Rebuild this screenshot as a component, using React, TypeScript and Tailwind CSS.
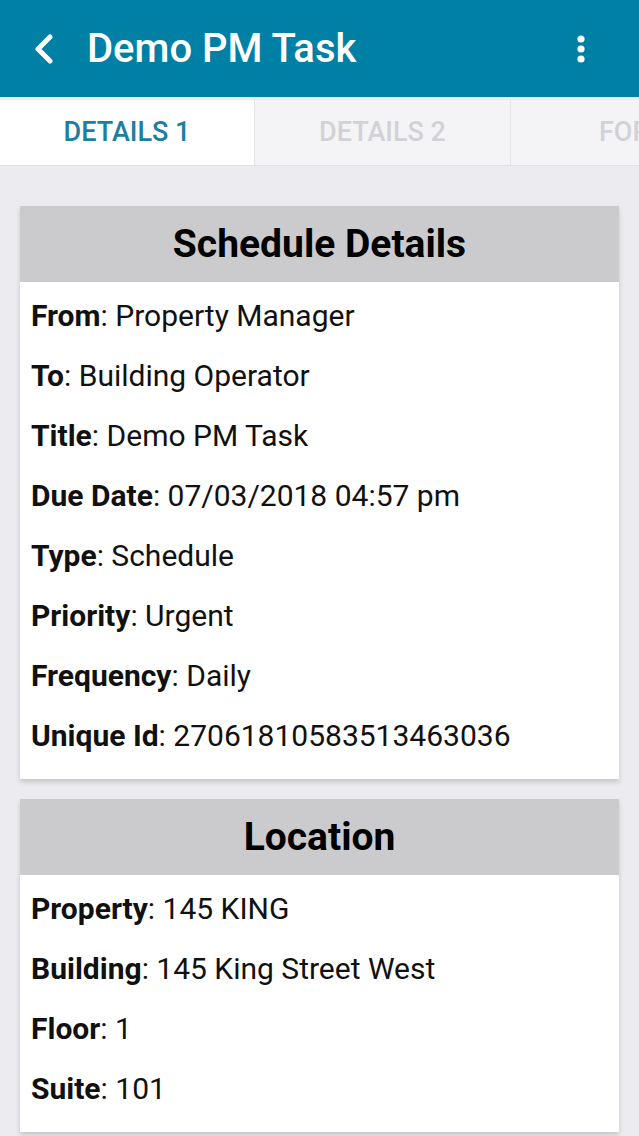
import React from "react";

interface Field {
  label: string;
  value: string;
}

const schedule: Field[] = [
  { label: "From", value: "Property Manager" },
  { label: "To", value: "Building Operator" },
  { label: "Title", value: "Demo PM Task" },
  { label: "Due Date", value: "07/03/2018 04:57 pm" },
  { label: "Type", value: "Schedule" },
  { label: "Priority", value: "Urgent" },
  { label: "Frequency", value: "Daily" },
  { label: "Unique Id", value: "27061810583513463036" },
];

const location: Field[] = [
  { label: "Property", value: "145 KING" },
  { label: "Building", value: "145 King Street West" },
  { label: "Floor", value: "1" },
  { label: "Suite", value: "101" },
];

const Card: React.FC<{ title: string; fields: Field[] }> = ({ title, fields }) => (
  <div className="bg-white shadow-[0_3px_5px_rgba(0,0,0,0.16)]">
    <div className="h-[76px] bg-[#cbcacc] flex items-center justify-center">
      <h2 className="text-[39px] font-bold text-black leading-none">{title}</h2>
    </div>
    <div className="pt-[3px] pb-[14px]">
      {fields.map((f) => (
        <div key={f.label} className="h-[60px] flex items-center px-[11px] text-[30px] text-[#111] whitespace-nowrap">
          <span className="font-bold">{f.label}</span>
          <span>: {f.value}</span>
        </div>
      ))}
    </div>
  </div>
);

const App: React.FC = () => {
  return (
    <div className="w-[639px] h-[1136px] overflow-hidden bg-[#ebebf0] font-['Roboto',sans-serif]">
      {/* App bar */}
      <div className="h-[97px] bg-[#0080a5] flex items-center px-[33px] text-white">
        <svg width="22" height="30" viewBox="0 0 22 30" className="mr-[32px]">
          <path d="M17 3 L5 15 L17 27" fill="none" stroke="white" strokeWidth="5" strokeLinecap="round" strokeLinejoin="round" />
        </svg>
        <h1 className="text-[40px] font-medium flex-1">Demo PM Task</h1>
        <svg width="10" height="28" viewBox="0 0 10 28" className="mr-[20px]">
          <circle cx="5" cy="4" r="3.6" fill="white" />
          <circle cx="5" cy="14" r="3.6" fill="white" />
          <circle cx="5" cy="24" r="3.6" fill="white" />
        </svg>
      </div>

      {/* Tabs */}
      <div className="h-[69px] flex border-b border-[#e2e2e6] text-[27px] font-medium pt-[3px]">
        <div className="w-[254px] bg-white flex items-center justify-center text-[#1b7fa1]">
          DETAILS 1
        </div>
        <div className="w-[256px] bg-[#f4f4f6] border-l border-[#e4e4e8] flex items-center justify-center text-[#d2d2d6]">
          DETAILS 2
        </div>
        <div className="flex-1 bg-[#f4f4f6] border-l border-[#e4e4e8] flex items-center pl-[88px] text-[#d2d2d6] overflow-hidden whitespace-nowrap">
          FORMS
        </div>
      </div>

      {/* Content */}
      <div className="px-[20px] pt-[40px] flex flex-col gap-[20px]">
        <Card title="Schedule Details" fields={schedule} />
        <Card title="Location" fields={location} />
      </div>
    </div>
  );
};

export default App;
